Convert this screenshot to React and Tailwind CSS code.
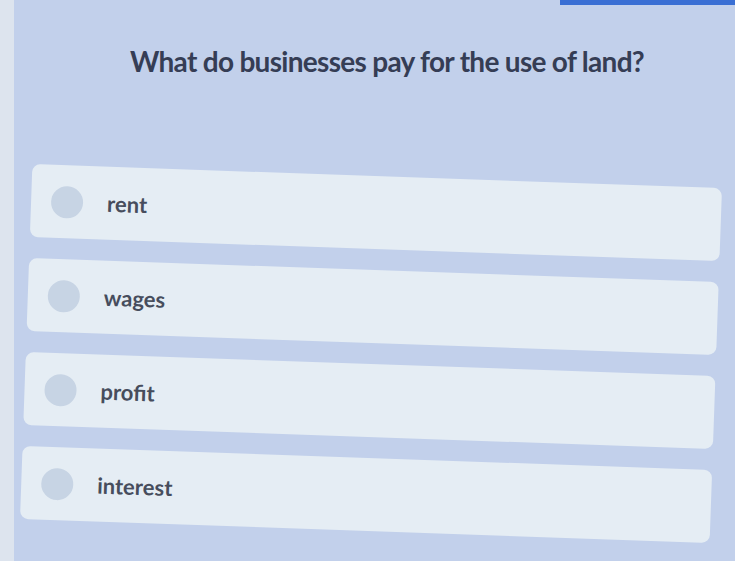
export default function App() {
  const options = ["rent", "wages", "profit", "interest"];
  return (
    <div
      className="relative flex h-[561px] w-[735px] overflow-hidden bg-[#c2d0eb]"
      style={{ fontFamily: "Lato, 'Open Sans', sans-serif" }}
    >
      {/* top accent bar */}
      <div className="absolute right-0 top-0 h-[5px] w-[175px] bg-[#3a6fd4]" />
      {/* left window edge */}
      <div className="h-full w-[14px] shrink-0 bg-[#dde4ee]" />
      <div className="flex flex-1 flex-col">
        <h1 className="pl-[116px] pt-[44px] text-[28px] font-bold leading-[34px] tracking-[-0.7px] text-[#353d55]">
          What do businesses pay for the use of land?
        </h1>
        <div className="ml-[12px] mt-[98px] flex w-[690px] rotate-[2deg] flex-col gap-[21px]">
          {options.map((o) => (
            <div
              key={o}
              className="flex h-[73px] items-center rounded-[8px] bg-[#e5edf4] pl-[20px]"
            >
              <div className="h-[32px] w-[32px] rounded-full bg-[#c7d4e4]" />
              <span className="ml-[24px] text-[22px] font-bold text-[#474d5d]">
                {o}
              </span>
            </div>
          ))}
        </div>
      </div>
    </div>
  );
}
